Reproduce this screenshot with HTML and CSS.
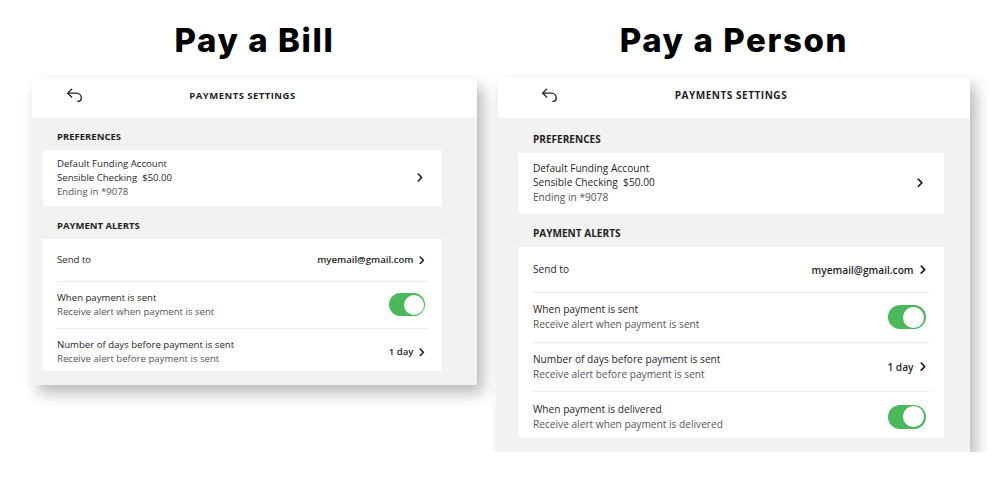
FILE: index.html
```html
<!DOCTYPE html>
<html lang="en">
<head>
    <meta charset="UTF-8">
    <meta name="viewport" content="width=device-width, initial-scale=1.0">
    <title>Payments Settings</title>
    <link rel="stylesheet" href="styles.css">
</head>
<body>

<main class="page">
    <section class="demo demo-bill">
        <h1 class="demo-title">Pay a Bill</h1>
        <div class="panel">
            <header class="panel-header">
                <button type="button" class="back-btn" aria-label="Back">
                    <svg viewBox="0 0 14 12"><path d="M4.5 1 L1.2 4.2 L4.5 7.4 M1.2 4.2 H8.2 C10.6 4.2 12.4 5.9 12.4 8 C12.4 9.9 11 11 9.6 11" /></svg>
                </button>
                <h2 class="panel-title">Payments Settings</h2>
            </header>
            <div class="panel-body">
                <h3 class="section-label">Preferences</h3>
                <div class="card card-account">
                    <div class="row-text">
                        <p>Default Funding Account</p>
                        <p>Sensible Checking&nbsp; $50.00</p>
                        <p class="muted">Ending in *9078</p>
                    </div>
                    <svg class="chevron" viewBox="0 0 6 9"><path d="M1.2 1 L4.6 4.5 L1.2 8" /></svg>
                </div>

                <h3 class="section-label">Payment Alerts</h3>
                <div class="card card-alerts">
                    <div class="row">
                        <p>Send to</p>
                        <div class="row-value">
                            <span>myemail@gmail.com</span>
                            <svg class="chevron" viewBox="0 0 6 9"><path d="M1.2 1 L4.6 4.5 L1.2 8" /></svg>
                        </div>
                    </div>
                    <div class="row">
                        <div class="row-text">
                            <p>When payment is sent</p>
                            <p class="muted">Receive alert when payment is sent</p>
                        </div>
                        <span class="toggle is-on"><span class="toggle-knob"></span></span>
                    </div>
                    <div class="row">
                        <div class="row-text">
                            <p>Number of days before payment is sent</p>
                            <p class="muted">Receive alert before payment is sent</p>
                        </div>
                        <div class="row-value">
                            <span>1 day</span>
                            <svg class="chevron" viewBox="0 0 6 9"><path d="M1.2 1 L4.6 4.5 L1.2 8" /></svg>
                        </div>
                    </div>
                </div>
            </div>
        </div>
    </section>

    <section class="demo demo-person">
        <h1 class="demo-title">Pay a Person</h1>
        <div class="panel">
            <header class="panel-header">
                <button type="button" class="back-btn" aria-label="Back">
                    <svg viewBox="0 0 14 12"><path d="M4.5 1 L1.2 4.2 L4.5 7.4 M1.2 4.2 H8.2 C10.6 4.2 12.4 5.9 12.4 8 C12.4 9.9 11 11 9.6 11" /></svg>
                </button>
                <h2 class="panel-title">Payments Settings</h2>
            </header>
            <div class="panel-body">
                <h3 class="section-label">Preferences</h3>
                <div class="card card-account">
                    <div class="row-text">
                        <p>Default Funding Account</p>
                        <p>Sensible Checking&nbsp; $50.00</p>
                        <p class="muted">Ending in *9078</p>
                    </div>
                    <svg class="chevron" viewBox="0 0 6 9"><path d="M1.2 1 L4.6 4.5 L1.2 8" /></svg>
                </div>

                <h3 class="section-label">Payment Alerts</h3>
                <div class="card card-alerts">
                    <div class="row">
                        <p>Send to</p>
                        <div class="row-value">
                            <span>myemail@gmail.com</span>
                            <svg class="chevron" viewBox="0 0 6 9"><path d="M1.2 1 L4.6 4.5 L1.2 8" /></svg>
                        </div>
                    </div>
                    <div class="row">
                        <div class="row-text">
                            <p>When payment is sent</p>
                            <p class="muted">Receive alert when payment is sent</p>
                        </div>
                        <span class="toggle is-on"><span class="toggle-knob"></span></span>
                    </div>
                    <div class="row">
                        <div class="row-text">
                            <p>Number of days before payment is sent</p>
                            <p class="muted">Receive alert before payment is sent</p>
                        </div>
                        <div class="row-value">
                            <span>1 day</span>
                            <svg class="chevron" viewBox="0 0 6 9"><path d="M1.2 1 L4.6 4.5 L1.2 8" /></svg>
                        </div>
                    </div>
                    <div class="row">
                        <div class="row-text">
                            <p>When payment is delivered</p>
                            <p class="muted">Receive alert when payment is delivered</p>
                        </div>
                        <span class="toggle is-on"><span class="toggle-knob"></span></span>
                    </div>
                </div>
            </div>
        </div>
    </section>
</main>

</body>
</html>
```

FILE: styles.css
```css
html, body {
    margin: 0;
    background-color: #fff;
}
body {
    font-family: 'Open Sans', 'Liberation Sans', sans-serif;
    color: #1f1f1f;
}
p, h1, h2, h3 {
    margin: 0;
}
.page {
    display: flex;
    align-items: flex-start;
    gap: 21px;
    padding: 0 0 0 32px;
}
.demo {
    display: flex;
    flex-direction: column;
}
.demo-title {
    font-family: 'Inter', 'Liberation Sans', sans-serif;
    font-weight: 800;
    font-size: 33px;
    line-height: 40px;
    letter-spacing: 1.6px;
    text-align: center;
    color: #000;
    margin: 20px 0 19px;
}
.demo-person .demo-title {
    margin-bottom: 18px;
}

/* panel is sized in em so the second one can be drawn a bit larger */
.demo-bill .panel {
    font-size: 10px;
    --pad-left: 1.1em;
    --pad-right: 3.5em;
}
.demo-person .panel {
    font-size: 10.6px;
    --pad-left: 1.9em;
    --pad-right: 2.45em;
}
.panel {
    width: 44.5em;
    background-color: #f2f2f1;
    box-shadow: 6px 8px 14px rgba(0, 0, 0, 0.28);
}
.panel-header {
    height: 3.8em;
    box-sizing: border-box;
    padding: 0 var(--pad-right) 0.6em var(--pad-left);
    background-color: #fff;
    display: grid;
    grid-template-columns: 1fr auto 1fr;
    align-items: center;
}
.back-btn {
    justify-self: start;
    margin-left: 1.7em;
    padding: 0;
    border: none;
    background: none;
    display: flex;
    cursor: pointer;
}
.back-btn svg {
    width: 1.3em;
    height: 1.1em;
    fill: none;
    stroke: #222;
    stroke-width: 1.1;
    stroke-linecap: round;
    stroke-linejoin: round;
}
.panel-title {
    grid-column: 2;
    font-size: 0.95em;
    font-weight: 700;
    letter-spacing: 0.05em;
    text-transform: uppercase;
}
.panel-body {
    padding: 0 var(--pad-right) 1.4em var(--pad-left);
}
.section-label {
    font-size: 0.95em;
    line-height: 1.263;
    font-weight: 700;
    text-transform: uppercase;
    margin: 1.474em 0 0.737em 1.474em;
}
.card {
    background-color: #fff;
}
.card p {
    font-size: 0.96em;
    line-height: 1.458;
}
.muted {
    color: #555;
}
.card-account {
    display: flex;
    align-items: center;
    justify-content: space-between;
    padding: 0.7em 1.9em 0.7em 1.4em;
}
.card-alerts {
    padding: 0 1.4em;
}
.row {
    display: flex;
    align-items: center;
    justify-content: space-between;
    min-height: 2.4em;
    padding: 0.9em 0.3em 0.9em 0;
}
.row + .row {
    border-top: 1px solid #ececec;
}
.row:last-child {
    padding-bottom: 0.5em;
}
.row-value {
    display: flex;
    align-items: center;
    gap: 0.6em;
    font-size: 0.96em;
    font-weight: 600;
}
.chevron {
    width: 0.6em;
    height: 0.9em;
    fill: none;
    stroke: #1a1a1a;
    stroke-width: 1.6;
    stroke-linecap: round;
    stroke-linejoin: round;
}
.toggle {
    width: 3.6em;
    height: 2.3em;
    box-sizing: border-box;
    padding: 0.15em;
    border-radius: 1.2em;
    background-color: #d5d5d5;
    display: flex;
}
.toggle.is-on {
    background-color: #4cb85c;
    justify-content: flex-end;
}
.toggle-knob {
    width: 2em;
    height: 2em;
    border-radius: 50%;
    background-color: #fff;
}
```
